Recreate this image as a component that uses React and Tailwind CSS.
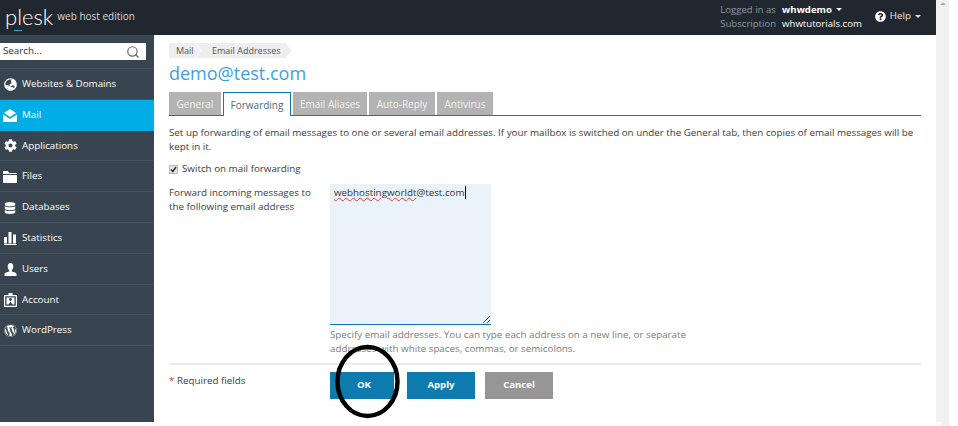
import React from 'react';
import { FaGlobeAsia, FaCog, FaDatabase, FaWordpress, FaQuestionCircle } from 'react-icons/fa';
import { LuSearch } from 'react-icons/lu';

const MailIcon = () => (
  <svg width="14" height="13" viewBox="0 0 14 13" fill="currentColor">
    <path d="M7 0l6 4-6 4-6-4z" />
    <path d="M0 5.5l7 4.5 7-4.5V13H0z" />
  </svg>
);

const FilesIcon = () => (
  <svg width="14" height="12" viewBox="0 0 14 12" fill="currentColor">
    <path d="M0 0h5l1 2h8v1H0z" />
    <path d="M0 4h14v8H0z" />
  </svg>
);

const StatsIcon = () => (
  <svg width="13" height="13" viewBox="0 0 13 13" fill="currentColor">
    <rect x="0" y="5" width="3" height="6.5" />
    <rect x="4.5" y="0" width="3" height="11.5" />
    <rect x="9" y="2.5" width="3" height="9" />
    <rect x="0" y="12" width="13" height="1" />
  </svg>
);

const UserIcon = () => (
  <svg width="13" height="13" viewBox="0 0 13 13" fill="currentColor">
    <path d="M6.5 0C8.4 0 9.3 1.5 9.3 3.4c0 1.6-.7 3-1.5 3.8v1.2c2 .5 4.7 1 4.7 2.6v2H.5v-2c0-1.6 2.700-2.100 4.700-2.600V7.200c-.8-.8-1.500-2.200-1.500-3.800C3.700 1.500 4.600 0 6.500 0z" />
  </svg>
);

const AccountIcon = () => (
  <svg width="13" height="14" viewBox="0 0 13 14" fill="currentColor">
    <path d="M4.500 0h4v2H13v12H0V2h4.500zM1.200 3.200v9.600h10.600V3.200z" fillRule="evenodd" />
    <path d="M2.500 4.500h8v7H8.500L6.500 8.500l-2 3h-2z" />
    <circle cx="6.500" cy="6.500" r="1.400" fill="#38444f" />
  </svg>
);

const nav = [
  { label: 'Websites & Domains', icon: <FaGlobeAsia size={13} /> },
  { label: 'Mail', icon: <MailIcon />, active: true },
  { label: 'Applications', icon: <FaCog size={13} /> },
  { label: 'Files', icon: <FilesIcon /> },
  { label: 'Databases', icon: <FaDatabase size={12} /> },
  { label: 'Statistics', icon: <StatsIcon /> },
  { label: 'Users', icon: <UserIcon /> },
  { label: 'Account', icon: <AccountIcon /> },
  { label: 'WordPress', icon: <FaWordpress size={13} /> },
];

const tabs = [
  { label: 'General', width: 'w-[52px]' },
  { label: 'Forwarding', width: 'w-[68px]' },
  { label: 'Email Aliases', width: 'w-[74px]' },
  { label: 'Auto-Reply', width: 'w-[66px]' },
  { label: 'Antivirus', width: 'w-[56px]' },
];

const Caret = () => <span className="ml-1 inline-block border-x-[3px] border-t-[3px] border-x-transparent border-t-current align-middle" />;

const App = () => (
  <div className="relative flex h-[426px] w-[958px] overflow-hidden bg-white font-['Open_Sans',sans-serif] text-[9.8px] text-[#3c3c3c]">
    <div className="flex w-[936px] shrink-0 flex-col">
      <header className="flex h-[35px] shrink-0 items-center justify-between bg-[#20272f] pb-[2px] pr-[15px]">
        <div className="flex items-center pl-[5px]">
          <span className="relative font-['Lato',sans-serif] text-[22px] font-light leading-none text-white">
            plesk
            <span className="absolute bottom-[-3px] left-[9px] h-[1px] w-[8px] bg-[#1fa9dc]" />
          </span>
          <span className="ml-[4px] text-[10px] text-[#d5d8da]">web host edition</span>
        </div>
        <div className="flex items-center">
          <div className="grid grid-cols-[auto_auto] gap-x-[6px] text-[9.6px] leading-[14px]">
            <span className="text-[#8a97a3]">Logged in as</span>
            <span className="font-bold text-white">whwdemo<Caret /></span>
            <span className="text-[#8a97a3]">Subscription</span>
            <span className="font-medium text-white">whwtutorials.com</span>
          </div>
          <div className="ml-[13px] flex items-center text-[#e6e8ea]">
            <FaQuestionCircle size={11} className="mr-[4px] text-white" />
            Help<Caret />
          </div>
        </div>
      </header>

      <div className="flex h-[387px] shrink-0">
        <aside className="w-[154px] shrink-0 bg-[#38444f] text-white">
          <div className="flex h-[34px] items-start border-b border-[#46535f] pt-[8px]">
            <div className="flex h-[17px] w-[146px] items-center justify-between bg-white pl-[3px] pr-[6px] text-[#333]">
              Search...
              <LuSearch size={14} className="text-[#666]" />
            </div>
          </div>
          {nav.map((item) => (
            <div
              key={item.label}
              className={`flex h-[30.8px] items-center border-b pl-[2px] pt-[1px] ${item.active ? 'border-[#00ade5] bg-[#00ade5]' : 'border-[#46535f]'}`}
            >
              <span className="flex w-[16px] justify-center">{item.icon}</span>
              <span className="ml-[4px]">{item.label}</span>
            </div>
          ))}
        </aside>

        <main className="min-w-0 flex-1 px-[15px] pt-[8px]">
          <div className="flex h-[15px] items-center text-[9px] text-[#555]">
            <span className="flex h-full w-[31px] items-center bg-[#eeeeee] pl-[7px] [clip-path:polygon(0_0,calc(100%-5px)_0,100%_50%,calc(100%-5px)_100%,0_100%)]">Mail</span>
            <span className="ml-[-4px] flex h-full items-center bg-[#eeeeee] pl-[16px] pr-[11px] [clip-path:polygon(0_0,calc(100%-6px)_0,100%_50%,calc(100%-6px)_100%,0_100%,5px_50%)]">Email Addresses</span>
          </div>

          <h1 className="mt-[3px] text-[18px] leading-[24px] text-[#3f9fe0]">demo@test.com</h1>

          <div className="mt-[7px] flex h-[24px] gap-[2px] border-b border-[#0d7bad] text-[10px]">
            {tabs.map((tab) => (
              <div
                key={tab.label}
                className={tab.label === 'Forwarding'
                  ? `flex h-[24px] items-center justify-center border border-b-0 border-[#0d7bad] bg-white pt-[1px] text-[#4d6b80] ${tab.width}`
                  : `flex h-[23px] items-center justify-center bg-[#b3b3b3] pt-[1px] text-[#f2f2f2] ${tab.width}`}
              >
                {tab.label}
              </div>
            ))}
          </div>

          <p className="mt-[10px] leading-[14px]">
            Set up forwarding of email messages to one or several email addresses. If your mailbox is switched on under the General tab, then copies of email messages will be kept in it.
          </p>

          <div className="mt-[8px] flex h-[14px] items-center">
            <span className="flex h-[9px] w-[9px] items-center justify-center border border-[#bbb] bg-[#e4e4e4]">
              <svg width="7" height="7" viewBox="0 0 7 7" fill="none" stroke="#333" strokeWidth="1.5">
                <path d="M1 3.500l1.800 2L6 1" />
              </svg>
            </span>
            <span className="ml-[4px]">Switch on mail forwarding</span>
          </div>

          <div className="mt-[8px] flex">
            <div className="w-[161px] shrink-0 pt-[2px] leading-[14px]">
              Forward incoming messages to<br />the following email address
            </div>
            <div>
              <div className="relative h-[141px] w-[161px] border-b border-[#0d7bad] bg-[#ebf3fa] px-[4px] pt-[1px] text-[#333] leading-[16px]">
                <span className="underline decoration-[#e04040] decoration-wavy decoration-1 underline-offset-[1px]">webhostingworldt</span>@test.com<span className="border-r border-black" />
                <svg className="absolute bottom-0 right-0" width="10" height="10" viewBox="0 0 10 10" stroke="#666" fill="none">
                  <path d="M2 9l7-7M6 9l3-3" />
                </svg>
              </div>
              <p className="mt-[3px] w-[380px] leading-[14px] text-[#7b7b7b]">
                Specify email addresses. You can type each address on a new line, or separate addresses with white spaces, commas, or semicolons.
              </p>
            </div>
          </div>

          <div className="mt-[7px] flex border-t-2 border-[#ececec] pt-[7px]">
            <div className="w-[161px] shrink-0 pt-[2px]">
              <span className="text-[#c0392b]">*</span> Required fields
            </div>
            <div className="flex text-[9.6px] font-bold text-white">
              <button className="h-[27px] w-[64px] bg-[#0d7bad] pl-[4px]">OK</button>
              <button className="ml-[13px] h-[27px] w-[68px] bg-[#0d7bad]">Apply</button>
              <button className="ml-[10px] h-[27px] w-[68px] bg-[#969696]">Cancel</button>
            </div>
          </div>
        </main>
      </div>
    </div>

    <div className="w-[13px] shrink-0">
      <div className="flex h-[422px] justify-center bg-[#f1f1f1] pt-[2px]">
        <span className="h-0 border-x-[3px] border-b-[3px] border-x-transparent border-b-[#b5b5b5]" />
      </div>
      <div className="ml-[5px] h-[4px] w-[8px] bg-[#f1f1f1]" />
    </div>

    <svg className="absolute left-[334px] top-[343px]" width="68" height="77" viewBox="0 0 68 77" fill="none">
      <ellipse cx="33.5" cy="38.5" rx="30" ry="34.5" stroke="#000" strokeWidth="4.5" />
    </svg>
  </div>
);

export default App;
